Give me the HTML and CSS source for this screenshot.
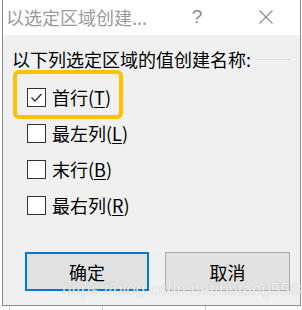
FILE: index.html
```html
<!DOCTYPE html>
<html lang="zh-CN">
<head>
<meta charset="utf-8">
<link rel="stylesheet" href="styles.css">
</head>
<body>
<div class="dialog">
  <div class="titlebar">
    <span class="title">以选定区域创建...</span>
    <span class="help">?</span>
    <span class="close">
      <svg width="16" height="16" viewBox="0 0 16 16"><path d="M1.5 1.5 L14.5 14.5 M14.5 1.5 L1.5 14.5" stroke="#8a8a8a" stroke-width="1.1" fill="none"/></svg>
    </span>
  </div>
  <div class="content">
    <div class="header">
      <span class="header-text">以下列选定区域的值创建名称:</span>
      <span class="sep"></span>
    </div>
    <div class="options">
      <div class="highlight"></div>
      <div class="row">
        <span class="box">
          <svg width="17" height="17" viewBox="0 0 17 17"><path d="M3.5 8.5 L7 12 L13.5 5" stroke="#333" stroke-width="1.4" fill="none"/></svg>
        </span>
        <span class="label">首行(<u>T</u>)</span>
      </div>
      <div class="row">
        <span class="box"></span>
        <span class="label">最左列(<u>L</u>)</span>
      </div>
      <div class="row">
        <span class="box"></span>
        <span class="label">末行(<u>B</u>)</span>
      </div>
      <div class="row">
        <span class="box"></span>
        <span class="label">最右列(<u>R</u>)</span>
      </div>
    </div>
    <div class="buttons">
      <div class="btn btn-default">确定</div>
      <div class="btn">取消</div>
    </div>
    <div class="watermark">https://blog.csdn.net/bbtang5568</div>
  </div>
</div>
<div class="grid-strip"></div>
</body>
</html>
```
FILE: styles.css
```css
html, body {
  margin: 0;
  padding: 0;
  background: #ffffff;
}
body {
  width: 302px;
  height: 310px;
  overflow: hidden;
  font-family: "Noto Sans CJK SC", "Liberation Sans", sans-serif;
}
.dialog {
  margin-left: 2px;
  width: 299px;
  height: 306px;
  box-sizing: border-box;
  border: 1px solid #8c8c8c;
  border-top: none;
  display: flex;
  flex-direction: column;
  background: #f0f0f0;
}
.titlebar {
  height: 35px;
  background: #ffffff;
  display: flex;
  align-items: center;
  padding-left: 3px;
  padding-right: 11px;
  flex-shrink: 0;
}
.title {
  flex: 1;
  font-size: 18px;
  color: #9a9a9a;
  line-height: 24px;
  margin-top: -2px;
}
.help {
  width: 20px;
  text-align: center;
  font-family: "Liberation Sans", sans-serif;
  font-size: 19px;
  color: #8a8a8a;
  margin-top: -1px;
}
.close {
  width: 46px;
  margin-left: 36px;
  display: flex;
  justify-content: center;
  align-items: center;
  margin-top: -1px;
}
.close svg { display: block; }
.content {
  position: relative;
  flex: 1;
  padding-top: 12px;
}
.header {
  display: flex;
  align-items: center;
  height: 24px;
  padding-left: 9px;
  padding-right: 9px;
}
.header-text {
  font-size: 18px;
  color: #000;
  line-height: 24px;
  white-space: nowrap;
}
.sep {
  flex: 1;
  height: 1px;
  background: #dcdcdc;
  margin-left: 5px;
  margin-top: 1px;
}
.options {
  position: relative;
  margin-top: 8px;
}
.highlight {
  position: absolute;
  left: 10px;
  top: -9px;
  width: 110px;
  height: 49px;
  box-sizing: border-box;
  border: 4px solid #ffc000;
  border-radius: 6px;
}
.row {
  height: 36px;
  display: flex;
  align-items: center;
  padding-left: 24px;
}
.box {
  width: 19px;
  height: 19px;
  box-sizing: border-box;
  border: 1px solid #333333;
  background: #ffffff;
  display: flex;
  align-items: center;
  justify-content: center;
  flex-shrink: 0;
}
.box svg { display: block; }
.label {
  margin-left: 6px;
  font-size: 18px;
  line-height: 24px;
  color: #000;
}
.label u {
  text-decoration-thickness: 1px;
  text-underline-offset: 2px;
}
.buttons {
  display: flex;
  gap: 16px;
  padding-left: 22px;
  margin-top: 29px;
}
.btn {
  width: 125px;
  height: 39px;
  box-sizing: border-box;
  border: 1px solid #adadad;
  background: #e1e1e1;
  display: flex;
  align-items: center;
  justify-content: center;
  font-size: 18px;
  color: #000;
}
.btn-default {
  width: 124px;
  border: 2px solid #0078d7;
}
.watermark {
  position: absolute;
  left: 59px;
  top: 245px;
  font-family: "Liberation Sans", sans-serif;
  font-size: 17px;
  color: rgba(255, 255, 255, 0.75);
  text-shadow: 0 0 1px rgba(120, 120, 120, 0.45);
  white-space: nowrap;
}
.grid-strip {
  height: 4px;
  background:
    linear-gradient(#c8c8c8, #c8c8c8) 9px 0 / 1px 100% no-repeat,
    linear-gradient(#c8c8c8, #c8c8c8) 102px 0 / 1px 100% no-repeat,
    linear-gradient(#c8c8c8, #c8c8c8) 205px 0 / 1px 100% no-repeat;
}
```
